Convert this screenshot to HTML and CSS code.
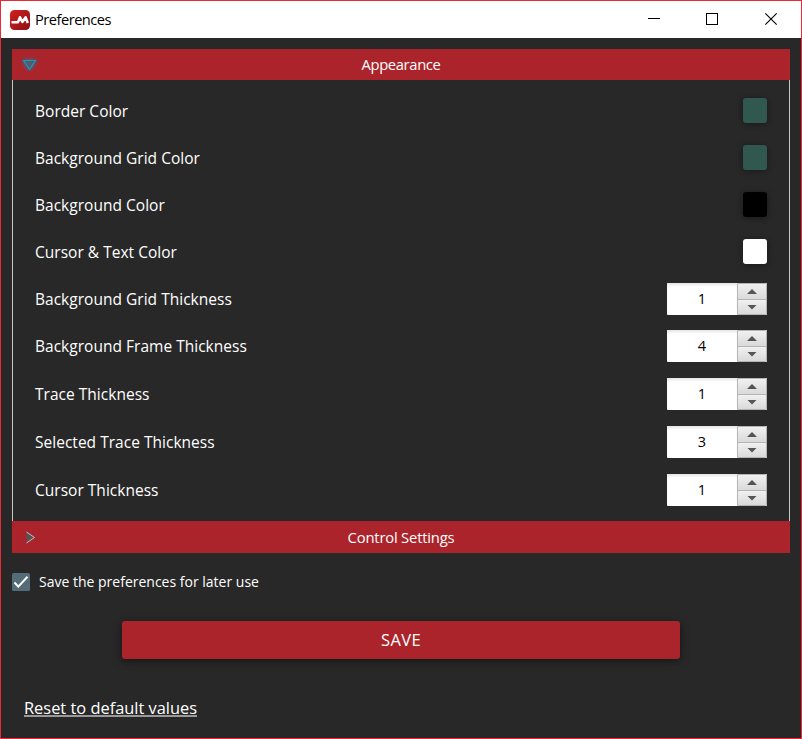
FILE: index.html
```
<!DOCTYPE html>
<html lang="en">
<head>
<meta charset="utf-8">
<title>Preferences</title>
<link rel="stylesheet" href="styles.css">
</head>
<body>
<div class="window">
  <header class="titlebar">
    <svg class="logo" width="20" height="20" viewBox="0 0 20 20">
      <defs><linearGradient id="lg" x1="0" y1="0" x2="1" y2="1"><stop offset="0" stop-color="#d0201f"/><stop offset="1" stop-color="#8f1016"/></linearGradient></defs>
      <rect width="20" height="20" rx="4.5" fill="url(#lg)"/>
      <path d="M1.5 12.3H8L10 7.2L12.4 12L15.6 7.2L17.8 13" fill="none" stroke="#fff" stroke-width="2.5" stroke-linejoin="round"/>
    </svg>
    <h1 class="title">Preferences</h1>
    <svg class="controls" width="130" height="14" viewBox="0 0 130 14" fill="none" stroke="#000">
      <path d="M0 6.5H12"/><rect x="58.5" y="1.5" width="11" height="11"/><path d="M117.3 1.3L128.7 12.7M128.7 1.3L117.3 12.7" stroke-width="1.1"/>
    </svg>
  </header>
  <main class="content">
    <div class="section-head first">
      <svg class="arrow open" width="18" height="16" viewBox="0 0 18 16"><path d="M2.6 3.5H14.4L8.5 12.5Z" fill="#555b60" stroke="#0f9bcb" stroke-width="1.2"/></svg>
      <span>Appearance</span>
    </div>
    <section class="panel">
      <div class="row"><span>Border Color</span><i class="swatch green"></i></div>
      <div class="row"><span>Background Grid Color</span><i class="swatch green"></i></div>
      <div class="row"><span>Background Color</span><i class="swatch black"></i></div>
      <div class="row"><span>Cursor &amp; Text Color</span><i class="swatch white"></i></div>
      <div class="row tall"><span>Background Grid Thickness</span><div class="spinner"><span class="value">1</span><div class="steps"><b class="up"></b><b class="down"></b></div></div></div>
      <div class="row short"><span>Background Frame Thickness</span><div class="spinner"><span class="value">4</span><div class="steps"><b class="up"></b><b class="down"></b></div></div></div>
      <div class="row tall"><span>Trace Thickness</span><div class="spinner"><span class="value">1</span><div class="steps"><b class="up"></b><b class="down"></b></div></div></div>
      <div class="row tall"><span>Selected Trace Thickness</span><div class="spinner"><span class="value">3</span><div class="steps"><b class="up"></b><b class="down"></b></div></div></div>
      <div class="row tall"><span>Cursor Thickness</span><div class="spinner"><span class="value">1</span><div class="steps"><b class="up"></b><b class="down"></b></div></div></div>
    </section>
    <div class="section-head">
      <svg class="arrow" width="18" height="16" viewBox="0 0 18 16"><path d="M5.5 3L13.5 8.5L5.5 14Z" fill="#555"/><path d="M5.5 3L13.5 8.5L5.5 14" fill="none" stroke="#c8bcbc"/></svg>
      <span>Control Settings</span>
    </div>
    <label class="remember">
      <svg width="18" height="18" viewBox="0 0 18 18"><rect width="18" height="18" rx="1.5" fill="#546b78"/><path d="M2.5 9.5L6.3 13.6L15.5 3.8" fill="none" stroke="#fff" stroke-width="2"/></svg>
      <span>Save the preferences for later use</span>
    </label>
    <button class="save">SAVE</button>
    <a class="reset">Reset to default values</a>
  </main>
</div>
</body>
</html>
```
FILE: styles.css
```
* { box-sizing: border-box; }
body { margin: 0; font-family: "Open Sans", "Noto Sans", sans-serif; color: #fff; }
.window { width: 802px; height: 739px; border: 1px solid #e92a38; background: #282828; }
.titlebar { height: 37px; background: #fff; color: #000; display: flex; align-items: center; padding: 0 23px 0 9px; }
.title { margin: 0 0 2px 5px; font-size: 14.6px; letter-spacing: -.48px; font-weight: 400; line-height: 20px; }
.controls { margin: 0 0 2px auto; }
.content { padding: 11px 11px 0; display: flex; flex-direction: column; }
.section-head { height: 32px; background: #ab242b; display: grid; grid-template-columns: 18px 1fr 18px; align-items: center; padding: 0 9px; text-align: center; font-size: 14.8px; letter-spacing: -.2px; line-height: 20px; }
.section-head.first { height: 31px; letter-spacing: -.38px; }
.section-head.first span { padding-bottom: 2px; }
.open { filter: drop-shadow(0 0 2px #0b86b4); }
.panel { height: 441px; border: solid #c8c8c8; border-width: 0 1px; padding: 7px 22px 0; font-size: 15.5px; letter-spacing: .02px; }
.row { height: 47px; display: flex; align-items: center; justify-content: space-between; line-height: 20px; }
.row.tall { height: 48px; }
.row.short { height: 46px; margin-bottom: 1px; }
.swatch { width: 24px; height: 25px; border-radius: 3px; box-shadow: 0 1px 6px rgba(0,0,0,.4); }
.green { background: #30584e; }
.black { background: #000; }
.white { background: #fff; }
.spinner { width: 100px; height: 32px; display: flex; background: #fff; color: #000; border-radius: 1px; }
.value { width: 70px; line-height: 32px; font-size: 14.5px; text-align: center; box-shadow: inset 0 3px 3px -1px #e4e4e4; }
.steps { width: 30px; border: 1px solid #b5b5b5; border-radius: 0 2px 2px 0; display: grid; grid-template-rows: 16px 14px; }
.steps b { display: grid; place-items: center; background: linear-gradient(#f0f0f0, #dadada); }
.steps .up { border-bottom: 1px solid #b5b5b5; }
.steps b::before { content: ""; width: 10px; height: 5px; background: #555; clip-path: polygon(50% 0, 100% 100%, 0 100%); }
.steps .down::before { clip-path: polygon(0 0, 100% 0, 50% 100%); }
.remember { display: flex; align-items: center; gap: 9px; margin-top: 20px; height: 18px; font-size: 14px; }
.remember span { padding-bottom: 1px; }
.save { width: 558px; height: 38px; margin: 30px 0 0 110px; padding: 0 0 2px; border: 0; border-radius: 3px; background: #ab242b; color: #fff; font: 16.5px "Open Sans", sans-serif; letter-spacing: .4px; box-shadow: 0 2px 9px rgba(0,0,0,.5); }
.reset { align-self: flex-start; margin: 38px 0 0 12px; font-size: 16.4px; line-height: 22px; border-bottom: 2px solid #999; height: 20px; }
```
